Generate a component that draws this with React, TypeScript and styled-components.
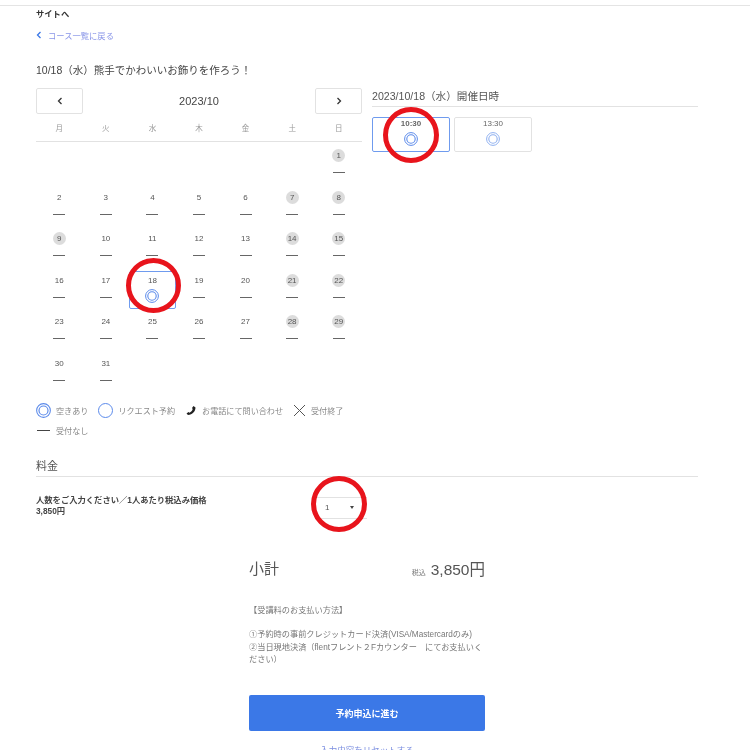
import React from "react";
import styled, { createGlobalStyle } from "styled-components";

const Global = createGlobalStyle`
  html, body {
    margin: 0;
    padding: 0;
    background: #fff;
  }
  body {
    font-family: "Liberation Sans", "Noto Sans CJK JP", sans-serif;
    color: #444;
    height: 750px;
    overflow: hidden;
  }
`;
const Page = styled.div`
  position: relative;
  width: 750px;
  height: 745px;
  overflow: hidden;
  border-top: 1px solid #e4e4e4;
  margin-top: 5px;
  box-sizing: border-box;
  padding: 0 52px 0 36px;
  will-change: transform;
`;
const SiteLink = styled.div`
  font-size: 8.3px;
  font-weight: 700;
  line-height: 14px;
  margin-top: 1px;
  color: #333;
`;
const BackLink = styled.a`
  display: flex;
  align-items: center;
  gap: 6px;
  margin-top: 7px;
  height: 14px;
  font-size: 8.3px;
  color: #8a96e8;
`;
const Title = styled.h1`
  margin: 20px 0 0;
  font-size: 10.5px;
  line-height: 16px;
  font-weight: 400;
  color: #444;
`;
const Columns = styled.div`
  display: grid;
  grid-template-columns: 326px 326px;
  column-gap: 10px;
  margin-top: 10px;
`;
const CalHead = styled.div`
  display: grid;
  grid-template-columns: 47px 1fr 47px;
  align-items: center;
  height: 26px;
`;
const NavBtn = styled.button`
  display: flex;
  align-items: center;
  justify-content: center;
  height: 26px;
  padding: 0;
  background: #fff;
  border: 1px solid #e2e2e2;
  border-radius: 2px;
  color: #333;
`;
const Month = styled.div`
  text-align: center;
  font-size: 11px;
  color: #444;
`;
const WeekRow = styled.div`
  display: grid;
  grid-template-columns: repeat(7, 1fr);
  height: 27px;
  align-items: center;
  border-bottom: 1px solid #e2e2e2;
  font-size: 7.5px;
  color: #999;
  text-align: center;
`;
const DayGrid = styled.div`
  display: grid;
  grid-template-columns: repeat(7, 1fr);
  grid-auto-rows: 41.6px;
  margin-top: 7px;
`;
const DayCell = styled.div<{ $selected?: boolean }>`
  display: flex;
  flex-direction: column;
  align-items: center;
  box-sizing: border-box;
  height: 38px;
  border: 1px solid ${(p) => (p.$selected ? "#6f9bee" : "transparent")};
  border-radius: 2px;
  margin: -3px 0 0;
  padding-top: 2px;
`;
const DayNum = styled.div<{ $off?: boolean }>`
  width: 13px;
  height: 13px;
  border-radius: 50%;
  background: ${(p) => (p.$off ? "#dcdcdc" : "transparent")};
  font-size: 8px;
  line-height: 13px;
  text-align: center;
  color: #555;
`;
const Dash = styled.div`
  width: 12px;
  height: 1px;
  margin-top: 10px;
  background: #666;
`;
const CellRing = styled.div`
  display: flex;
  margin-top: 2px;
`;
const SectionHead = styled.div`
  box-sizing: border-box;
  height: 19px;
  padding-top: 1px;
  font-size: 10.6px;
  line-height: 14px;
  color: #555;
  border-bottom: 1px solid #e2e2e2;
`;
const Times = styled.div`
  display: flex;
  gap: 4px;
  margin-top: 10px;
`;
const TimeCard = styled.div<{ $active?: boolean }>`
  box-sizing: border-box;
  width: 78px;
  height: 35px;
  display: flex;
  flex-direction: column;
  align-items: center;
  gap: 4px;
  padding-top: 1px;
  border: 1px solid ${(p) => (p.$active ? "#6f9bee" : "#e2e2e2")};
  border-radius: 2px;
  font-size: 8px;
  font-weight: ${(p) => (p.$active ? 700 : 400)};
  color: #666;
`;
const Legend = styled.div`
  display: flex;
  flex-wrap: wrap;
  width: 326px;
  margin-top: 2px;
`;
const LegendItem = styled.div`
  display: flex;
  align-items: center;
  gap: 5px;
  height: 20px;
  margin-right: 10px;
  font-size: 8.1px;
  color: #888;
`;
const FeeHead = styled.div`
  margin-top: 15px;
  height: 21px;
  font-size: 11px;
  line-height: 20px;
  color: #555;
  border-bottom: 1px solid #e2e2e2;
  box-sizing: border-box;
`;
const FeeRow = styled.div`
  display: grid;
  grid-template-columns: 279px 52px;
  margin-top: 18px;
`;
const FeeName = styled.div`
  font-size: 8.3px;
  line-height: 11px;
  font-weight: 700;
  color: #444;
`;
const SelectBox = styled.div`
  box-sizing: border-box;
  display: flex;
  justify-content: space-between;
  align-items: center;
  height: 22px;
  margin-top: 2px;
  padding: 0 13px 0 10px;
  border-top: 1px solid #e2e2e2;
  border-bottom: 1px solid #e2e2e2;
  font-size: 8px;
  color: #555;
`;
const Caret = styled.span`
  width: 0;
  height: 0;
  border-left: 2.5px solid transparent;
  border-right: 2.5px solid transparent;
  border-top: 3px solid #444;
`;
const Checkout = styled.div`
  width: 236px;
  margin: 38px 0 0 213px;
`;
const TotalRow = styled.div`
  display: flex;
  align-items: center;
  justify-content: space-between;
  height: 22px;
  color: #555;
`;
const TotalLabel = styled.div`
  font-size: 15px;
`;
const TotalPrice = styled.div`
  font-size: 15.5px;
`;
const TaxNote = styled.span`
  font-size: 7px;
  margin-right: 5px;
  color: #777;
`;
const Notes = styled.div`
  margin-top: 26px;
  font-size: 8.2px;
  line-height: 12.3px;
  color: #777;
`;
const NoteGap = styled.div`
  height: 12.5px;
`;
const SubmitBtn = styled.button`
  display: block;
  width: 236px;
  height: 36px;
  margin-top: 29px;
  border: 0;
  border-radius: 2px;
  background: #3b78e7;
  color: #fff;
  font-family: inherit;
  font-size: 9px;
  font-weight: 700;
`;
const ResetLink = styled.a`
  display: block;
  margin-top: 12px;
  text-align: center;
  font-size: 8.5px;
  color: #7c8fe0;
`;
const Mark = styled.span<{ $x: number; $y: number; $size: number }>`
  position: absolute;
  left: ${(p) => p.$x - p.$size / 2}px;
  top: ${(p) => p.$y - p.$size / 2 - 6}px;
  width: ${(p) => p.$size}px;
  height: ${(p) => p.$size}px;
  box-sizing: border-box;
  border: 5px solid #e8141c;
  border-radius: 50%;
`;

const DoubleCircle = ({ size = 14, color = "#5b8aea" }: { size?: number; color?: string }) => (
  <svg width={size} height={size} viewBox="0 0 14 14" fill="none" stroke={color}>
    <circle cx="7" cy="7" r="6.4" strokeWidth="1" />
    <circle cx="7" cy="7" r="4.2" strokeWidth="1.1" />
  </svg>
);
const Chevron = ({ left }: { left?: boolean }) => (
  <svg width="8" height="8" viewBox="0 0 8 8" fill="none" stroke="#333" strokeWidth="1.3">
    <path d={left ? "M5.5 1 L2.5 4 L5.5 7" : "M2.5 1 L5.5 4 L2.5 7"} />
  </svg>
);

const weeks = ["月", "火", "水", "木", "金", "土", "日"];
const offDays = [1, 7, 8, 9, 14, 15, 21, 22, 28, 29];

export default function App() {
  return (
    <>
      <Global />
      <Page>
        <SiteLink>サイトへ</SiteLink>
        <BackLink>
          <svg width="6" height="8" viewBox="0 0 6 8" fill="none" stroke="#3b78e7" strokeWidth="1.3">
            <path d="M4.5 1 L1.5 4 L4.5 7" />
          </svg>
          コース一覧に戻る
        </BackLink>
        <Title>10/18（水）熊手でかわいいお飾りを作ろう！</Title>
        <Columns>
          <div>
            <CalHead>
              <NavBtn><Chevron left /></NavBtn>
              <Month>2023/10</Month>
              <NavBtn><Chevron /></NavBtn>
            </CalHead>
            <WeekRow>
              {weeks.map((w) => <div key={w}>{w}</div>)}
            </WeekRow>
            <DayGrid>
              {Array.from({ length: 6 }).map((_, i) => <div key={i} />)}
              {Array.from({ length: 31 }, (_, i) => i + 1).map((d) => (
                <DayCell key={d} $selected={d === 18}>
                  <DayNum $off={offDays.includes(d)}>{d}</DayNum>
                  {d === 18 ? <CellRing><DoubleCircle /></CellRing> : <Dash />}
                </DayCell>
              ))}
            </DayGrid>
            <Legend>
              <LegendItem><DoubleCircle size={15} />空きあり</LegendItem>
              <LegendItem>
                <svg width="15" height="15" viewBox="0 0 15 15" fill="none" stroke="#5b8aea">
                  <circle cx="7.5" cy="7.5" r="7" />
                </svg>
                リクエスト予約
              </LegendItem>
              <LegendItem>
                <svg width="12" height="11" viewBox="0 0 11 11" fill="#222">
                  <path d="M8 1 L10 2.5 C10 6 7 10 2.5 10 L1 8.5 L3 7 L4 7.8 C5.5 7 6.8 5.6 7.2 4 L6.5 3 Z" />
                </svg>
                お電話にて問い合わせ
              </LegendItem>
              <LegendItem>
                <svg width="13" height="13" viewBox="0 0 13 13" fill="none" stroke="#555">
                  <path d="M1 1 L12 12 M12 1 L1 12" />
                </svg>
                受付終了
              </LegendItem>
              <LegendItem>
                <svg width="15" height="3" viewBox="0 0 15 3" fill="none" stroke="#444">
                  <path d="M1 1.5 H14" />
                </svg>
                受付なし
              </LegendItem>
            </Legend>
          </div>
          <div>
            <SectionHead>2023/10/18（水）開催日時</SectionHead>
            <Times>
              <TimeCard $active>10:30<DoubleCircle /></TimeCard>
              <TimeCard>13:30<DoubleCircle color="#8fb0f0" /></TimeCard>
            </Times>
          </div>
        </Columns>
        <FeeHead>料金</FeeHead>
        <FeeRow>
          <FeeName>
            人数をご入力ください／1人あたり税込み価格
            <br />
            3,850円
          </FeeName>
          <SelectBox>1<Caret /></SelectBox>
        </FeeRow>
        <Checkout>
          <TotalRow>
            <TotalLabel>小計</TotalLabel>
            <TotalPrice><TaxNote>税込</TaxNote>3,850円</TotalPrice>
          </TotalRow>
          <Notes>
            【受講料のお支払い方法】
            <NoteGap />
            ①予約時の事前クレジットカード決済(VISA/Mastercardのみ)
            <br />
            ②当日現地決済（flentフレント２Fカウンター　にてお支払いください）
          </Notes>
          <SubmitBtn>予約申込に進む</SubmitBtn>
          <ResetLink>入力内容をリセットする</ResetLink>
        </Checkout>
        <Mark $x={411} $y={135} $size={56} />
        <Mark $x={153} $y={285} $size={55} />
        <Mark $x={339} $y={504} $size={56} />
      </Page>
    </>
  );
}
